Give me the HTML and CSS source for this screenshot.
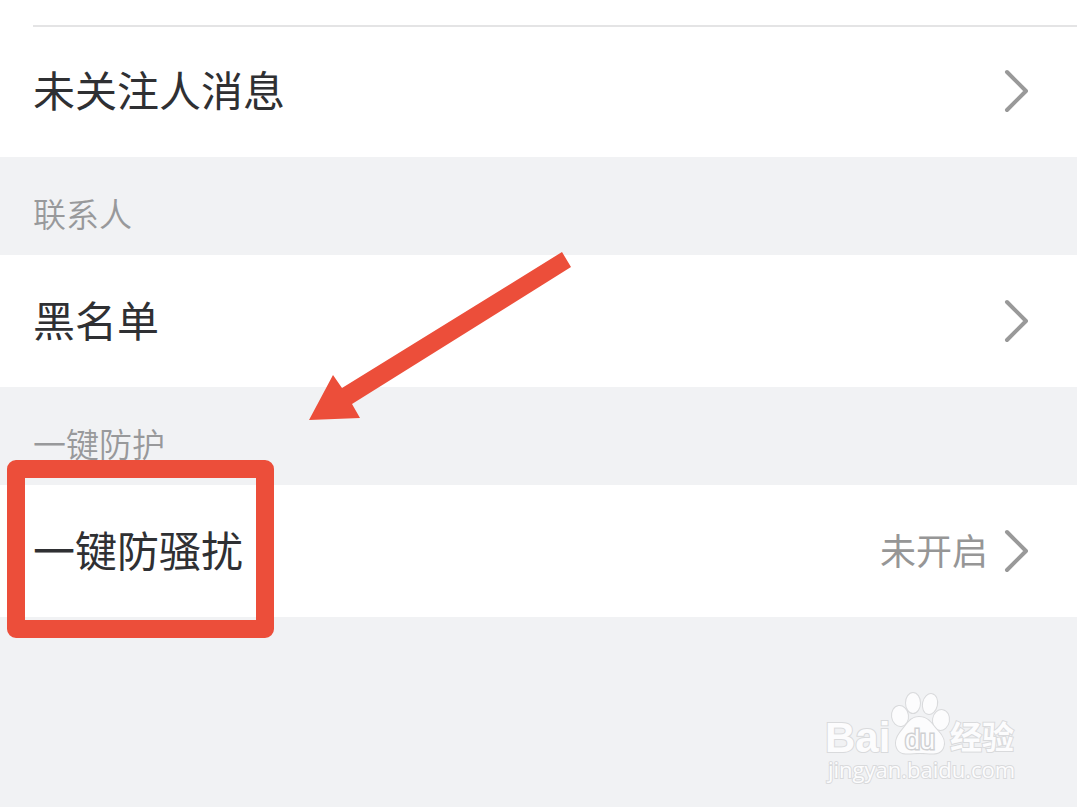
FILE: index.html
```html
<!DOCTYPE html>
<html lang="zh-CN">
<head>
<meta charset="utf-8">
<meta name="viewport" content="width=device-width, initial-scale=1">
<title>一键防护</title>
<link rel="stylesheet" href="styles.css">
</head>
<body>
<main class="settings">
  <section class="group group-first">
    <a class="row row-divided" href="#messages">
      <span class="row-title">未关注人消息</span>
      <svg class="chevron" viewBox="0 0 26 44" aria-hidden="true"><path d="M3 3 22 22 3 41"/></svg>
    </a>
  </section>
  <section class="group">
    <h2 class="group-label">联系人</h2>
    <a class="row" href="#blacklist">
      <span class="row-title">黑名单</span>
      <svg class="chevron" viewBox="0 0 26 44" aria-hidden="true"><path d="M3 3 22 22 3 41"/></svg>
    </a>
  </section>
  <section class="group">
    <h2 class="group-label">一键防护</h2>
    <a class="row" href="#protect">
      <span class="row-title">一键防骚扰</span>
      <span class="row-value">未开启</span>
      <svg class="chevron" viewBox="0 0 26 44" aria-hidden="true"><path d="M3 3 22 22 3 41"/></svg>
    </a>
    <span class="highlight" aria-hidden="true"></span>
  </section>
  <svg class="arrow" viewBox="0 0 264 170" aria-hidden="true"><path d="M254 2 263 17 44 154 52 168 1 170 25 125 34 138Z"/></svg>
  <svg class="watermark" viewBox="0 0 204 100" role="img" aria-label="Baidu 经验">
    <g class="mark">
      <text class="mark-latin" x="6" y="60">Bai</text>
      <ellipse cx="81" cy="24" rx="8" ry="10" transform="rotate(-8 81 24)"/>
      <ellipse cx="94" cy="11" rx="7" ry="10"/>
      <ellipse cx="111" cy="12" rx="7" ry="10" transform="rotate(12 111 12)"/>
      <ellipse cx="122" cy="28" rx="8" ry="10" transform="rotate(10 122 28)"/>
      <path d="M100 25C92 25 89 31 84 37 79 43 75 49 78 56 81 64 91 61 101 61S120 64 124 56C127 49 123 43 118 38 112 31 109 25 100 25Z"/>
      <text class="mark-du" x="86" y="57">du</text>
      <text class="mark-cjk" x="131" y="57">经验</text>
      <text class="mark-url" x="9" y="86">jingyan.baidu.com</text>
    </g>
  </svg>
</main>
</body>
</html>
```
FILE: styles.css
```css
* {
  box-sizing: border-box;
}

body {
  margin: 0;
  background: #f1f2f4;
  color: #2f3033;
  font-family: "Noto Sans CJK SC", sans-serif;
}

.settings {
  position: relative;
  min-height: 100vh;
}

.group {
  position: relative;
}

.group-first {
  padding-top: 25px;
  background: #fff;
}

.group-label {
  margin: 0;
  padding: 32px 33px 18px;
  color: #98999b;
  font-size: 33px;
  font-weight: 350;
  line-height: 48px;
}

.row {
  position: relative;
  display: flex;
  align-items: center;
  gap: 16px;
  min-height: 132px;
  padding: 0 47px 0 33px;
  background: #fff;
  color: inherit;
  text-decoration: none;
}

.row-divided::before {
  content: "";
  position: absolute;
  top: 0;
  right: 0;
  left: 33px;
  height: 2px;
  background: #e4e4e5;
}

.row-title {
  flex: 1;
  padding-bottom: 4px;
  font-size: 42px;
  line-height: 60px;
}

.row-value {
  padding-bottom: 4px;
  color: #969696;
  font-size: 36px;
  line-height: 52px;
}

.chevron {
  width: 26px;
  height: 44px;
  fill: none;
  stroke: #999;
  stroke-width: 4;
  stroke-linecap: round;
  stroke-linejoin: round;
}

.highlight {
  position: absolute;
  top: 73px;
  left: 7px;
  width: 267px;
  height: 178px;
  border: 18px solid #ec4e3a;
  border-radius: 9px;
}

.arrow {
  position: absolute;
  top: 250px;
  left: 308px;
  width: 264px;
  height: 170px;
  fill: #ec4e3a;
}

.watermark {
  position: absolute;
  right: 54px;
  bottom: 15px;
  width: 204px;
  height: 100px;
}

.mark {
  fill: #fcfcfd;
  stroke: #d9dadc;
  stroke-width: 2;
  paint-order: stroke;
}

.mark-latin {
  font: 700 42px "Liberation Sans", sans-serif;
}

.mark-du {
  stroke: #cfd0d2;
  stroke-width: 3;
  font: 400 27px "Liberation Sans", sans-serif;
}

.mark-cjk {
  font: 700 32px "Noto Sans CJK SC", sans-serif;
}

.mark-url {
  font: 400 22px "Open Sans", sans-serif;
}
```
